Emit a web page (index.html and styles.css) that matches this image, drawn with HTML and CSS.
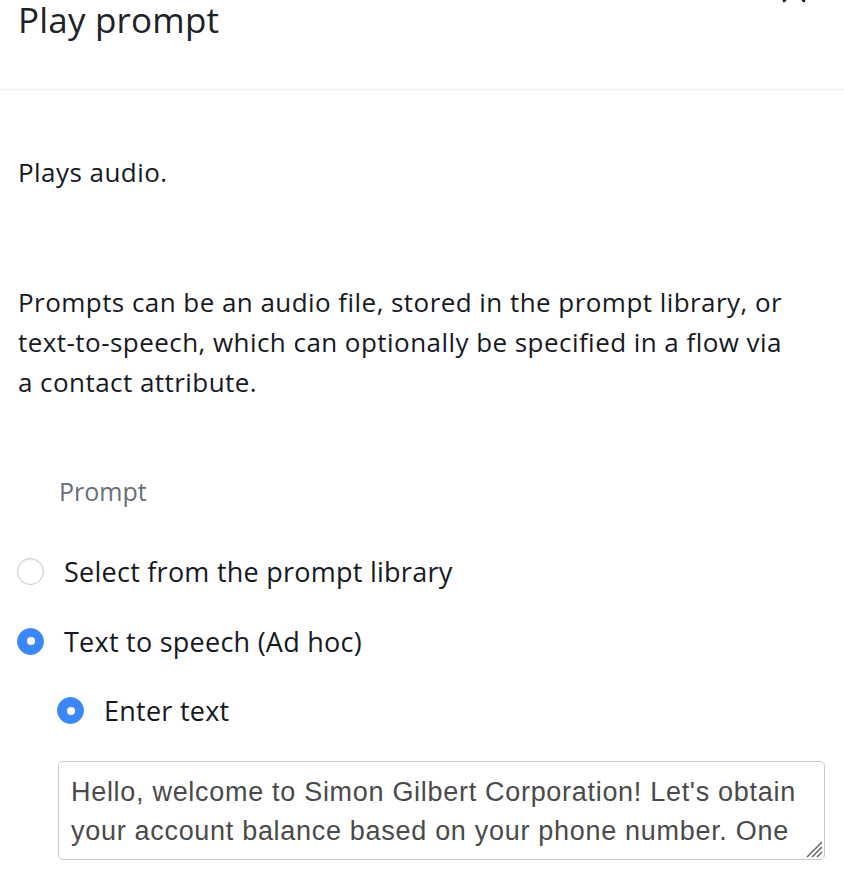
FILE: index.html
```html
<!DOCTYPE html>
<html>
<head>
<meta charset="utf-8">
<link rel="stylesheet" href="styles.css">
</head>
<body>
<div class="panel">
  <header class="header">
    <h1 class="title">Play prompt</h1>
    <button class="close" aria-label="Close">
      <svg width="24" height="24" viewBox="0 0 24 24"><path d="M2 2 L22 22 M22 2 L2 22" stroke="#16191f" stroke-width="2.5" fill="none" stroke-linecap="round"/></svg>
    </button>
  </header>
  <div class="content">
    <p class="desc">Plays audio.</p>
    <p class="info">Prompts can be an audio file, stored in the prompt library, or text-to-speech, which can optionally be specified in a flow via a contact attribute.</p>
    <div class="label">Prompt</div>
    <div class="options">
      <label class="option"><span class="radio"></span><span class="opt-text">Select from the prompt library</span></label>
      <label class="option"><span class="radio checked"></span><span class="opt-text">Text to speech (Ad hoc)</span></label>
      <div class="sub">
        <label class="option"><span class="radio checked"></span><span class="opt-text">Enter text</span></label>
        <div class="textarea">Hello, welcome to Simon Gilbert Corporation! Let's obtain your account balance based on your phone number. One moment please.<span class="grip"><svg width="20" height="20" viewBox="0 0 20 20"><path d="M19 4 L4 19 M19 9 L9 19 M19 14 L14 19" stroke="#666" stroke-width="1.5" fill="none"/></svg></span></div>
      </div>
    </div>
  </div>
</div>
</body>
</html>
```
FILE: styles.css
```css
* { box-sizing: border-box; }
html, body { margin: 0; padding: 0; background: #fff; }
body {
  font-family: "Open Sans", "Noto Sans", sans-serif;
  color: #16191f;
  width: 844px;
  height: 882px;
  overflow: hidden;
}
.header {
  position: relative;
  height: 90px;
  border-bottom: 1px solid #eaeded;
  padding: 0 18px;
}
.title {
  margin: 0;
  font-size: 35px;
  font-weight: 400;
  line-height: 40px;
  letter-spacing: 0.2px;
  color: #1d2228;
}
.close {
  position: absolute;
  top: -21px;
  right: 38px;
  background: none;
  border: 0;
  padding: 0;
}
.content {
  padding: 0 18px;
}
.desc {
  margin: 0;
  padding-top: 66px;
  font-size: 26px;
  letter-spacing: 0.45px;
  line-height: 32px;
}
.info {
  margin: 0;
  padding-top: 94px;
  max-width: 775px;
  font-size: 26px;
  letter-spacing: 0.45px;
  line-height: 40px;
}
.label {
  margin-top: 74px;
  padding-left: 41px;
  font-size: 25px;
  color: #687078;
  line-height: 30px;
}
.options {
  margin-top: 31px;
  display: flex;
  flex-direction: column;
}
.option {
  display: flex;
  align-items: center;
  height: 69.5px;
}
.radio {
  width: 27px;
  height: 27px;
  border-radius: 50%;
  border: 1.5px solid #c6c6c6;
  background: #fff;
  box-shadow: inset 0 1px 2px rgba(0,0,0,0.08);
  margin-left: -1px;
  position: relative;
  flex: none;
}
.radio.checked {
  background: #3b87f7;
  border-color: #3b87f7;
  box-shadow: none;
}
.radio.checked::after {
  content: "";
  position: absolute;
  left: 50%;
  top: 50%;
  width: 8px;
  height: 8px;
  margin: -4px 0 0 -4px;
  border-radius: 50%;
  background: #fff;
}
.opt-text {
  margin-left: 20px;
  font-size: 27px;
  letter-spacing: 0.25px;
  color: #16191f;
}
.sub {
  padding-left: 40px;
  display: flex;
  flex-direction: column;
}
.textarea {
  position: relative;
  margin-top: 15px;
  width: 767px;
  height: 99px;
  border: 1.5px solid #c8c8c8;
  border-radius: 5px;
  padding: 11px 12px 0 12px;
  font-family: "Liberation Sans", Arial, sans-serif;
  font-size: 27px;
  letter-spacing: 0.7px;
  line-height: 39px;
  color: #4a4a4a;
  overflow: hidden;
}
.grip {
  position: absolute;
  right: 1px;
  bottom: 1px;
  width: 20px;
  height: 20px;
  background: #fff;
}
.grip svg { display: block; }
```
